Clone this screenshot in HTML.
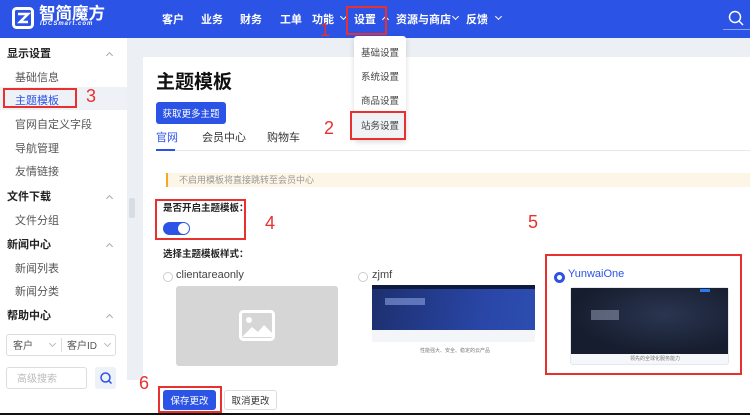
<!DOCTYPE html><html><head><meta charset="utf-8"><style>
*{margin:0;padding:0;box-sizing:border-box}
body{width:750px;height:415px;overflow:hidden;position:relative;font-family:"Liberation Sans","Noto Sans CJK SC",sans-serif;background:#eceff4;color:#333}
.a{position:absolute;white-space:nowrap}
.hd{left:0;top:0;width:750px;height:38px;background:#2b53e6}
.nav{color:#fff;font-size:11px;top:11px;font-weight:bold}
.cv{position:absolute;width:5px;height:5px;border-right:1px solid #fff;border-bottom:1px solid #fff;transform:rotate(45deg)}
.cu{position:absolute;width:5px;height:5px;border-left:1px solid #aaa;border-top:1px solid #aaa;transform:rotate(45deg)}
.sb{left:0;top:38px;width:127px;height:377px;background:#fff}
.sh{font-size:11px;font-weight:bold;color:#222;left:7px}
.si{font-size:11px;color:#555;left:15px}
.red{border:2px solid #e8312f}
.num{color:#e8312f;font-size:18px}
.card{left:143px;top:57px;width:607px;height:323px;background:#fff}
.btn{display:flex;align-items:center;justify-content:center;border-radius:3px;font-size:9.5px}
</style></head><body>
<div class="a hd"></div>
<svg class="a" style="left:12px;top:7px" width="22" height="22" viewBox="0 0 22 22"><rect x="1.5" y="1.5" width="19" height="19" rx="3" fill="none" stroke="#fff" stroke-width="3"/><path d="M6 7h10l-8 8h8" fill="none" stroke="#fff" stroke-width="2.5"/></svg>
<div class="a" style="left:39px;top:0px;color:#fff;font-size:16.5px;font-weight:bold">智简魔方</div>
<div class="a" style="left:40px;top:21px;color:#fff;font-size:6px;font-weight:bold;font-style:italic;letter-spacing:1px">IDCSmart.com</div>
<div class="a nav" style="left:162px">客户</div>
<div class="a nav" style="left:201px">业务</div>
<div class="a nav" style="left:240px">财务</div>
<div class="a nav" style="left:280px">工单</div>
<div class="a nav" style="left:312px">功能</div>
<div class="cv" style="left:341px;top:14px"></div>
<div class="a nav" style="left:354px">设置</div>
<div class="cv" style="left:383px;top:17px;transform:rotate(225deg)"></div>
<div class="a nav" style="left:396px">资源与商店</div>
<div class="cv" style="left:453px;top:14px"></div>
<div class="a nav" style="left:466px">反馈</div>
<div class="cv" style="left:496px;top:14px"></div>
<svg class="a" style="left:728px;top:10px" width="16" height="16"><circle cx="7" cy="7" r="5.5" fill="none" stroke="#fff" stroke-width="1.5"/><path d="M11 11l4 4" stroke="#fff" stroke-width="1.5"/></svg>
<div class="a" style="left:723px;top:29px;width:27px;height:1px;background:#8aa0f0"></div>
<div class="a red" style="left:346px;top:6px;width:41px;height:29px"></div>
<div class="a num" style="left:320px;top:20px">1</div>

<div class="a sb"></div>
<div class="a" style="left:0;top:87px;width:127px;height:23px;background:#eef1f6"></div>
<div class="a sh" style="top:45px">显示设置</div><div class="cu" style="left:107px;top:53px"></div>
<div class="a si" style="top:69px">基础信息</div>
<div class="a si" style="top:92px;color:#2b53e6">主题模板</div>
<div class="a red" style="left:3px;top:88px;width:74px;height:20px"></div>
<div class="a num" style="left:86px;top:86px">3</div>
<div class="a si" style="top:116px">官网自定义字段</div>
<div class="a si" style="top:140px">导航管理</div>
<div class="a si" style="top:163px">友情链接</div>
<div class="a sh" style="top:188px">文件下载</div><div class="cu" style="left:107px;top:196px"></div>
<div class="a si" style="top:212px">文件分组</div>
<div class="a sh" style="top:236px">新闻中心</div><div class="cu" style="left:107px;top:244px"></div>
<div class="a si" style="top:260px">新闻列表</div>
<div class="a si" style="top:283px">新闻分类</div>
<div class="a sh" style="top:307px">帮助中心</div><div class="cu" style="left:107px;top:315px"></div>
<div class="a" style="left:0;top:324px;width:127px;height:91px;background:#fff"></div>
<div class="a" style="left:6px;top:334px;width:110px;height:22px;border:1px solid #ddd;border-radius:3px"></div>
<div class="a" style="left:13px;top:337px;font-size:10px;color:#555">客户</div>
<div class="cv" style="left:50px;top:341px;border-color:#bbb"></div>
<div class="a" style="left:61px;top:338px;width:1px;height:14px;background:#ddd"></div>
<div class="a" style="left:67px;top:337px;font-size:10px;color:#555">客户ID</div>
<div class="cv" style="left:105px;top:341px;border-color:#bbb"></div>
<div class="a" style="left:6px;top:367px;width:81px;height:22px;border:1px solid #ddd;border-radius:3px"></div>
<div class="a" style="left:17px;top:370px;font-size:10px;color:#bbb">高级搜索</div>
<div class="a" style="left:95px;top:367px;width:21px;height:22px;background:#eef1f8;border-radius:3px"></div>
<svg class="a" style="left:99px;top:371px" width="14" height="14"><circle cx="6.5" cy="6.5" r="4.5" fill="none" stroke="#2b53e6" stroke-width="1.5"/><path d="M10 10l2.5 2.5" stroke="#2b53e6" stroke-width="1.5"/></svg>
<div class="a" style="left:129px;top:198px;width:6px;height:20px;background:#d8dce4;border-radius:2px"></div>

<div class="a card"></div>
<div class="a" style="left:156px;top:67px;font-size:19px;font-weight:bold;color:#111">主题模板</div>
<div class="a btn" style="left:156px;top:102px;width:70px;height:22px;background:#2b53e6;color:#fff">获取更多主题</div>
<div class="a" style="left:156px;top:129px;font-size:11px;color:#2b53e6">官网</div>
<div class="a" style="left:202px;top:129px;font-size:11px;color:#333">会员中心</div>
<div class="a" style="left:267px;top:129px;font-size:11px;color:#333">购物车</div>
<div class="a" style="left:156px;top:150px;width:594px;height:1px;background:#e4e7ed"></div>
<div class="a" style="left:156px;top:149px;width:19px;height:2px;background:#2b53e6"></div>
<div class="a" style="left:166px;top:173px;width:584px;height:14px;background:#fdf5e6;border-left:2px solid #f5a623"></div>
<div class="a" style="left:179px;top:173px;font-size:9px;color:#999">不启用模板将直接跳转至会员中心</div>
<div class="a" style="left:163px;top:200px;font-size:9.5px;color:#222;font-weight:bold">是否开启主题模板：</div>
<div class="a" style="left:163px;top:222px;width:27px;height:13px;background:#2b53e6;border-radius:7px"></div>
<div class="a" style="left:178px;top:223px;width:11px;height:11px;background:#fff;border-radius:50%"></div>
<div class="a red" style="left:155px;top:199px;width:91px;height:41px"></div>
<div class="a num" style="left:265px;top:213px">4</div>
<div class="a" style="left:163px;top:246px;font-size:9.5px;color:#222;font-weight:bold">选择主题模板样式：</div>
<div class="a" style="left:163px;top:272px;width:10px;height:10px;border:1px solid #ccc;border-radius:50%"></div>
<div class="a" style="left:176px;top:269px;font-size:11px;color:#444">clientareaonly</div>
<div class="a" style="left:176px;top:286px;width:162px;height:80px;background:#d6d6d6;border-radius:3px"></div>
<svg class="a" style="left:239px;top:310px" width="36" height="31"><rect x="1.5" y="1.5" width="33" height="28" rx="3" fill="none" stroke="#fff" stroke-width="3"/><circle cx="10" cy="10" r="3" fill="#fff"/><path d="M3 27l10-10 6 5 6-7 9 9v3H3z" fill="#fff"/></svg>
<div class="a" style="left:358px;top:272px;width:10px;height:10px;border:1px solid #ccc;border-radius:50%"></div>
<div class="a" style="left:372px;top:269px;font-size:11px;color:#444">zjmf</div>
<div class="a" style="left:372px;top:285px;width:163px;height:45px;background:linear-gradient(100deg,#1c2f6e,#2a47a8 70%,#2c4db0)"></div>
<div class="a" style="left:372px;top:285px;width:163px;height:4px;background:#0f1a3e"></div>
<div class="a" style="left:385px;top:298px;width:40px;height:7px;background:#8aa0e0;opacity:.6"></div>
<div class="a" style="left:372px;top:330px;width:163px;height:12px;background:#f4f5f8"></div>
<div class="a" style="left:420px;top:347px;font-size:5px;color:#777">性能强大、安全、稳定的云产品</div>
<div class="a red" style="left:545px;top:254px;width:197px;height:121px"></div>
<div class="a num" style="left:528px;top:212px">5</div>
<div class="a" style="left:554px;top:272px;width:11px;height:11px;border:3.5px solid #2b53e6;border-radius:50%;background:#fff"></div>
<div class="a" style="left:568px;top:268px;font-size:11px;color:#2b53e6">YunwaiOne</div>
<div class="a" style="left:570px;top:287px;width:159px;height:78px;border:1px solid #e5e7ec;border-radius:3px;background:#f6f7fa"></div>
<div class="a" style="left:571px;top:288px;width:157px;height:66px;background:radial-gradient(ellipse at 60% 40%,#2a3550,#161d2e 70%)"></div>
<div class="a" style="left:591px;top:310px;width:28px;height:10px;background:#9aa4bb;opacity:.5"></div>
<div class="a" style="left:700px;top:289px;width:10px;height:3px;background:#2b7bf0"></div>
<div class="a" style="left:630px;top:355px;font-size:5px;color:#777">领先的全球化服务能力</div>

<div class="a" style="left:127px;top:380px;width:623px;height:33px;background:#fff"></div>
<div class="a btn" style="left:163px;top:390px;width:53px;height:20px;background:#2b53e6;color:#fff">保存更改</div>
<div class="a red" style="left:158px;top:386px;width:64px;height:27px"></div>
<div class="a btn" style="left:224px;top:390px;width:53px;height:20px;border:1px solid #ddd;color:#333">取消更改</div>
<div class="a num" style="left:139px;top:373px">6</div>
<div class="a" style="left:0;top:413px;width:750px;height:2px;background:#111"></div>

<div class="a" style="left:354px;top:36px;width:52px;height:104px;background:#fff;box-shadow:0 2px 6px rgba(0,0,0,.15);border-radius:3px"></div>
<div class="a" style="left:361px;top:45px;font-size:9.5px;color:#444">基础设置</div>
<div class="a" style="left:361px;top:69px;font-size:9.5px;color:#444">系统设置</div>
<div class="a" style="left:361px;top:93px;font-size:9.5px;color:#444">商品设置</div>
<div class="a" style="left:351px;top:112px;width:53px;height:26px;background:#f0f2f5"></div>
<div class="a" style="left:361px;top:118px;font-size:9.5px;color:#444">站务设置</div>
<div class="a red" style="left:350px;top:111px;width:56px;height:29px"></div>
<div class="a num" style="left:324px;top:118px">2</div>
</body></html>
